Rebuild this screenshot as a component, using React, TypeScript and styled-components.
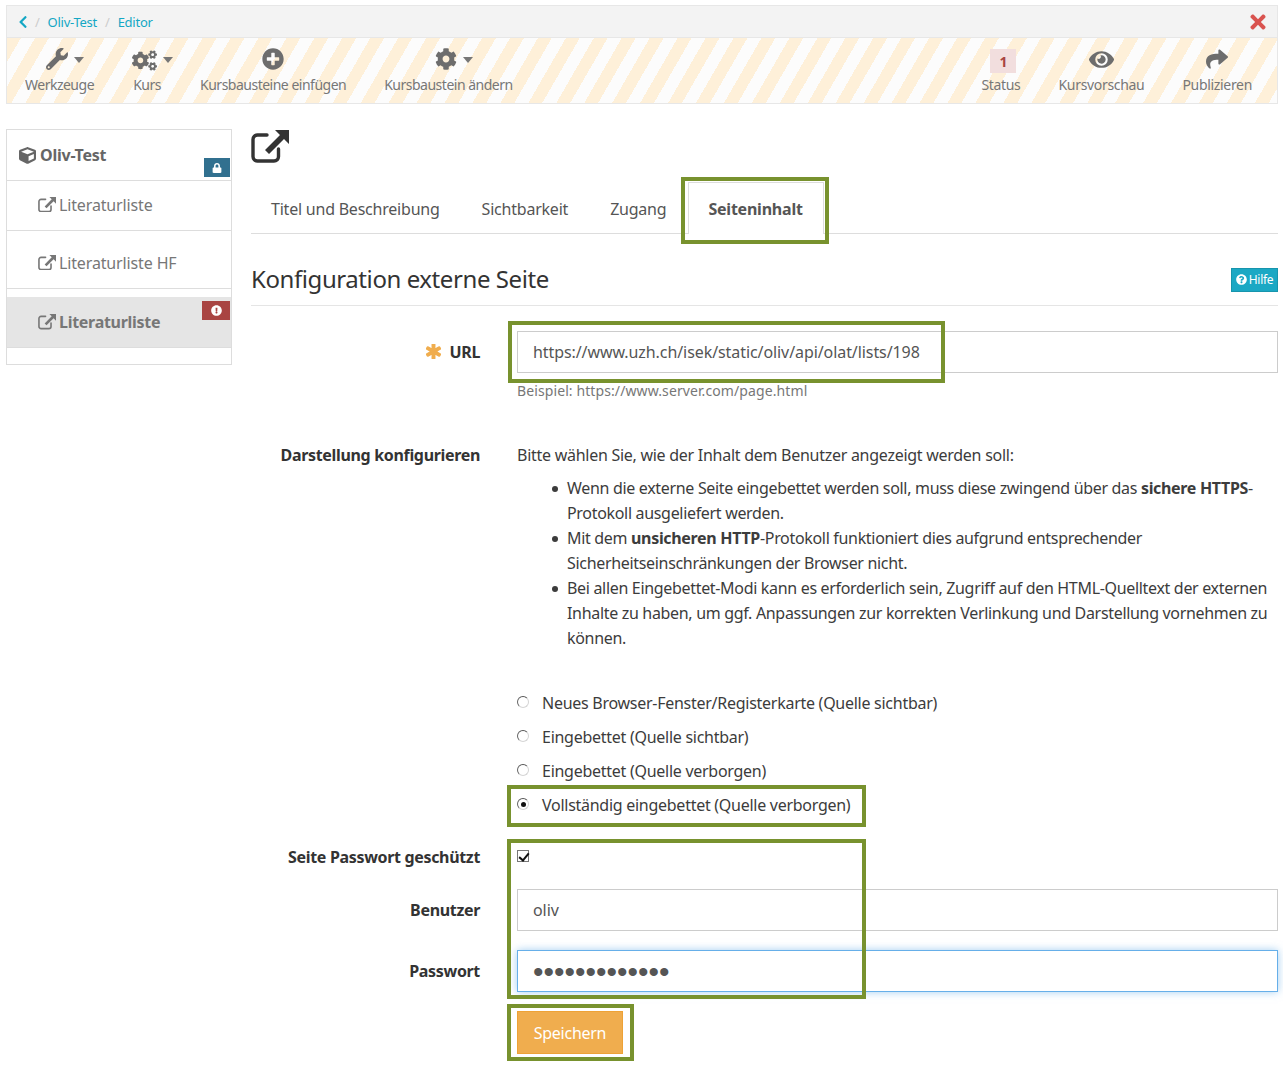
import React from 'react';
import styled, { createGlobalStyle } from 'styled-components';
import {
  FaAsterisk,
  FaChevronLeft,
  FaCog,
  FaCogs,
  FaCube,
  FaExclamationCircle,
  FaEye,
  FaLock,
  FaPlusCircle,
  FaQuestionCircle,
  FaShare,
  FaTimes,
  FaWrench,
} from 'react-icons/fa';

const GlobalStyle = createGlobalStyle`
  html, body { margin: 0; padding: 0; background: #fff; }
  body {
    font-family: "Noto Sans", "Liberation Sans", sans-serif;
    font-size: 16px;
    letter-spacing: -0.27px;
    color: #3c3c3c;
  }
  * { box-sizing: border-box; }
`;

const Page = styled.div`
  width: 1283px;
  height: 1068px;
  padding: 5px 5px 0 6px;
  overflow: hidden;
`;

// Kopfleiste
const TopBar = styled.header`
  border: 1px solid #e7e7e7;
  height: 99px;
`;

const Breadcrumb = styled.div`
  height: 32px;
  background: #f3f3f3;
  border-bottom: 1px solid #e7e7e7;
  display: flex;
  align-items: center;
  padding: 0 12px;
  font-size: 13px;
  letter-spacing: -0.25px;
  color: #14a7c4;
`;

const Crumb = styled.a`
  color: #14a7c4;
  display: flex;
`;

const BackCrumb = styled(Crumb)`
  margin: 0 -3px;
`;

const Slash = styled.span`
  color: #ccc;
  margin: 0 8px;
`;

const CloseButton = styled.span`
  margin-left: auto;
  margin-right: -4px;
  color: #d9534f;
  display: flex;
  font-size: 22px;
`;

const Toolbar = styled.div`
  height: 65px;
  display: flex;
  justify-content: space-between;
  padding-right: 6px;
  background: repeating-linear-gradient(
    120deg,
    #fef0d9 0,
    #fef0d9 12px,
    #fcfcfc 12px,
    #fcfcfc 24.2px
  );
`;

const ToolGroup = styled.div`
  display: flex;

  &:first-child {
    margin-left: -1px;
  }
`;

const Tool = styled.div`
  padding: 0 19px;
  display: flex;
  flex-direction: column;
  align-items: center;
  color: #777;
  font-size: 14px;
  letter-spacing: -0.5px;
`;

const RightTool = styled(Tool)`
  letter-spacing: -0.32px;
`;

const ToolIcon = styled.div`
  height: 38px;
  padding-top: 10px;
  display: flex;
  align-items: flex-start;
  justify-content: center;
  font-size: 22px;
  color: #6d6d6d;
`;

const EyeIcon = styled(ToolIcon)`
  font-size: 25px;
  padding-top: 9px;
`;

const MenuIcon = styled.span<{ $size?: number }>`
  position: relative;
  display: flex;
  margin-right: 5px;
  font-size: ${(p) => p.$size ?? 22}px;
`;

const Caret = styled.span`
  position: absolute;
  left: calc(100% + 6px);
  top: 9px;
  width: 0;
  height: 0;
  border-left: 5.5px solid transparent;
  border-right: 5.5px solid transparent;
  border-top: 6px solid #777;
`;

const StatusBadge = styled.span`
  width: 26px;
  height: 24px;
  margin: 1px 0 0 5px;
  background: #f2dede;
  color: #a94442;
  font-size: 14px;
  font-weight: 700;
  display: flex;
  align-items: center;
  justify-content: center;
`;

const ToolLabel = styled.div`
  line-height: 18px;
`;

// Inhalt
const Columns = styled.div`
  display: flex;
  margin-top: 25px;
`;

const Sidebar = styled.nav`
  width: 226px;
  height: 236px;
  flex-shrink: 0;
  border: 1px solid #ddd;
  color: #777;
  margin-right: 19px;
  letter-spacing: -0.14px;
`;

const RootNode = styled.div`
  position: relative;
  height: 51px;
  border-bottom: 1px solid #ddd;
  padding-left: 12px;
  display: flex;
  align-items: center;
  gap: 4px;
  font-weight: 700;
  color: #666;
  letter-spacing: -0.24px;
`;

const SideItem = styled.div<{ $height: number; $down?: number; $up?: number; $active?: boolean }>`
  position: relative;
  height: ${(p) => p.$height}px;
  padding: ${(p) => p.$down ?? 0}px 0 ${(p) => p.$up ?? 0}px 31px;
  display: flex;
  align-items: center;
  gap: 3px;
  border-bottom: 1px solid #ddd;
  font-weight: ${(p) => (p.$active ? 700 : 400)};
  letter-spacing: ${(p) => (p.$active ? -0.28 : -0.14)}px;
  background: ${(p) => (p.$active ? '#e5e5e5' : 'transparent')};
  margin-top: ${(p) => (p.$active ? 8 : 0)}px;
`;

const LockBadge = styled.span`
  position: absolute;
  right: 1px;
  bottom: 3px;
  width: 26px;
  height: 19px;
  background: #31708f;
  color: #fff;
  font-size: 10px;
  display: flex;
  align-items: center;
  justify-content: center;
`;

const ErrorBadge = styled.span`
  position: absolute;
  right: 1px;
  top: 4px;
  width: 28px;
  height: 19px;
  background: #a94442;
  color: #fff;
  font-size: 11px;
  display: flex;
  align-items: center;
  justify-content: center;
`;

const Main = styled.main`
  flex: 1;
  min-width: 0;
`;

const PageIcon = styled.div`
  height: 48px;
  padding-top: 1px;
  display: flex;
  align-items: flex-start;
  color: #333;
`;

const Tabs = styled.div`
  height: 57px;
  display: flex;
  border-bottom: 1px solid #ddd;
`;

const Tab = styled.div`
  height: 56px;
  padding: 7px 22px 0 20px;
  display: flex;
  align-items: center;
  letter-spacing: -0.22px;
  color: #555;
`;

const ActiveTab = styled.div`
  position: relative;
  height: 52px;
  margin-top: 5px;
  padding: 0 20px 0 19px;
  display: flex;
  align-items: center;
  letter-spacing: -0.22px;
  font-weight: 700;
  color: #555;
  background: #fff;
  border: 1px solid #ddd;
  border-bottom: none;
`;

const Mark = styled.div`
  position: absolute;
  border: 4px solid #78922e;
  pointer-events: none;
`;

const TabMark = styled(Mark)`
  left: -8px;
  right: -6px;
  top: -6px;
  height: 67px;
`;

const SectionHead = styled.div`
  height: 72px;
  border-bottom: 1px solid #e5e5e5;
  display: flex;
  justify-content: space-between;
  align-items: center;
  padding-top: 20px;
`;

const Heading = styled.h2`
  margin: -2px 0 0;
  font-size: 24px;
  font-weight: 400;
  letter-spacing: -0.42px;
  color: #333;
`;

const HelpButton = styled.span`
  height: 24px;
  width: 47px;
  background: #1ba8c4;
  border: 1px solid #1795ad;
  color: #fff;
  font-size: 12px;
  letter-spacing: -0.3px;
  display: flex;
  align-items: center;
  justify-content: center;
  gap: 2px;
`;

const Row = styled.div`
  display: grid;
  grid-template-columns: 229px 1fr;
  column-gap: 37px;
`;

const UrlRow = styled(Row)`
  margin-top: 25px;
`;

const DisplayRow = styled(Row)`
  margin-top: 42px;
`;

const FieldLabel = styled.label`
  font-weight: 700;
  text-align: right;
  color: #333;
  line-height: 25px;
  letter-spacing: -0.33px;
`;

const InputLabel = styled(FieldLabel)`
  padding-top: 9px;
`;

const Star = styled.span`
  color: #f0ad4e;
  font-size: 15px;
  margin-right: 8px;
  vertical-align: -1px;

  svg {
    stroke: currentColor;
    stroke-width: 50;
  }
`;

const InputWrap = styled.div`
  position: relative;
`;

const UrlMark = styled(Mark)`
  left: -9px;
  top: -10px;
  width: 437px;
  height: 62px;
`;

const TextInput = styled.input<{ $focused?: boolean }>`
  display: block;
  width: 100%;
  height: 42px;
  padding: 0 15px;
  font: inherit;
  letter-spacing: -0.08px;
  color: #555;
  background: #fff;
  border: 1px solid ${(p) => (p.$focused ? '#66afe9' : '#ccc')};
  box-shadow: ${(p) => (p.$focused ? '0 0 8px rgba(102, 175, 233, 0.6)' : 'none')};
  outline: none;
`;

const PasswordInput = styled(TextInput)`
  padding-top: 2px;
  font-family: "Liberation Sans", sans-serif;
  font-size: 30px;
  letter-spacing: 0;
`;

const Hint = styled.div`
  margin-top: 8px;
  line-height: 20px;
  font-size: 14px;
  letter-spacing: 0.1px;
  color: #777;
`;

const Intro = styled.p`
  margin: 0;
  line-height: 25px;
`;

const Bullets = styled.ul`
  margin: 8px 0 0;
  padding: 0 0 0 50px;
  line-height: 25px;
  list-style: none;
  letter-spacing: -0.32px;
`;

const Bullet = styled.li`
  position: relative;

  &::before {
    content: '';
    position: absolute;
    left: -15px;
    top: 10px;
    width: 6px;
    height: 6px;
    border-radius: 50%;
    background: #3c3c3c;
  }
`;

const RadioGroup = styled.div`
  margin-top: 35px;
  display: flex;
  flex-direction: column;
`;

const RadioRow = styled.label`
  position: relative;
  height: 34px;
  display: flex;
  align-items: center;
  gap: 13px;
`;

const RadioMark = styled(Mark)`
  left: -10px;
  top: -3px;
  width: 359px;
  height: 42px;
`;

const Radio = styled.input`
  appearance: none;
  width: 12px;
  height: 12px;
  margin: -2px 0 0 0;
  border-radius: 50%;
  border: 1px solid #d5d5d5;
  border-top-color: #555;
  border-left-color: #666;
  background: #fff;
  flex-shrink: 0;
  display: grid;
  place-items: center;

  &:checked::after {
    content: '';
    width: 5px;
    height: 5px;
    border-radius: 50%;
    background: #111;
  }
`;

const CredentialBlock = styled.div`
  position: relative;
  margin-top: 17px;
`;

const CredentialMark = styled(Mark)`
  left: 256px;
  top: 0;
  width: 359px;
  height: 160px;
`;

const CheckRow = styled(Row)`
  height: 50px;
  padding-top: 6px;
`;

const Check = styled.input`
  appearance: none;
  width: 12px;
  height: 12px;
  margin: 5px 0 0;
  border: 1px solid #777;
  background: #fff;
  position: relative;

  &:checked::after {
    content: '';
    position: absolute;
    left: 3px;
    top: 0;
    width: 4px;
    height: 8px;
    border: solid #111;
    border-width: 0 2px 2px 0;
    transform: rotate(40deg);
  }
`;

const PasswordRow = styled(Row)`
  margin-top: 19px;
`;

const SaveRow = styled(Row)`
  margin-top: 19px;
`;

const SaveWrap = styled.div`
  position: relative;
  width: 106px;
`;

const SaveMark = styled(Mark)`
  left: -10px;
  top: -7px;
  width: 127px;
  height: 57px;
`;

const SaveButton = styled.button`
  display: block;
  width: 106px;
  height: 43px;
  background: #f0ad4e;
  border: 1px solid #eea236;
  color: #fff;
  font: inherit;
  letter-spacing: inherit;
`;

// Symbol für externe Seite
const ExternalIcon: React.FC<{ width: number; stroke?: number }> = ({ width, stroke = 3.4 }) => (
  <svg width={width} height={(width * 33) / 38} viewBox="0 0 38 33" fill="none" aria-hidden="true">
    <path
      d="M16 5H6.5a4.5 4.5 0 0 0-4.5 4.500V26.500a4.500 4.500 0 0 0 4.500 4.500H23a4.500 4.500 0 0 0 4.500-4.500V19"
      stroke="currentColor"
      strokeWidth={stroke}
      strokeLinecap="round"
    />
    <path d="M24 0H38V14L33 9 18 24 14 20 29 5Z" fill="currentColor" />
  </svg>
);

const App: React.FC = () => {
  return (
    <Page>
      <GlobalStyle />
      <TopBar>
        <Breadcrumb>
          <BackCrumb as="span">
            <FaChevronLeft size={14} />
          </BackCrumb>
          <Slash>/</Slash>
          <Crumb>Oliv-Test</Crumb>
          <Slash>/</Slash>
          <Crumb>Editor</Crumb>
          <CloseButton>
            <FaTimes />
          </CloseButton>
        </Breadcrumb>
        <Toolbar>
          <ToolGroup>
            <Tool>
              <ToolIcon>
                <MenuIcon>
                  <FaWrench />
                  <Caret />
                </MenuIcon>
              </ToolIcon>
              <ToolLabel>Werkzeuge</ToolLabel>
            </Tool>
            <Tool>
              <ToolIcon>
                <MenuIcon $size={25}>
                  <FaCogs />
                  <Caret />
                </MenuIcon>
              </ToolIcon>
              <ToolLabel>Kurs</ToolLabel>
            </Tool>
            <Tool>
              <ToolIcon>
                <FaPlusCircle />
              </ToolIcon>
              <ToolLabel>Kursbausteine einfügen</ToolLabel>
            </Tool>
            <Tool>
              <ToolIcon>
                <MenuIcon>
                  <FaCog />
                  <Caret />
                </MenuIcon>
              </ToolIcon>
              <ToolLabel>Kursbaustein ändern</ToolLabel>
            </Tool>
          </ToolGroup>
          <ToolGroup>
            <RightTool>
              <ToolIcon>
                <StatusBadge>1</StatusBadge>
              </ToolIcon>
              <ToolLabel>Status</ToolLabel>
            </RightTool>
            <RightTool>
              <EyeIcon>
                <FaEye />
              </EyeIcon>
              <ToolLabel>Kursvorschau</ToolLabel>
            </RightTool>
            <RightTool>
              <ToolIcon>
                <FaShare />
              </ToolIcon>
              <ToolLabel>Publizieren</ToolLabel>
            </RightTool>
          </ToolGroup>
        </Toolbar>
      </TopBar>

      <Columns>
        <Sidebar>
          <RootNode>
            <FaCube size={17} />
            Oliv-Test
            <LockBadge>
              <FaLock />
            </LockBadge>
          </RootNode>
          <SideItem $height={50} $up={2}>
            <ExternalIcon width={18} />
            Literaturliste
          </SideItem>
          <SideItem $height={58} $down={6}>
            <ExternalIcon width={18} />
            Literaturliste HF
          </SideItem>
          <SideItem $height={51} $active>
            <ExternalIcon width={18} />
            Literaturliste
            <ErrorBadge>
              <FaExclamationCircle />
            </ErrorBadge>
          </SideItem>
        </Sidebar>

        <Main>
          <PageIcon>
            <ExternalIcon width={38} />
          </PageIcon>
          <Tabs>
            <Tab>Titel und Beschreibung</Tab>
            <Tab>Sichtbarkeit</Tab>
            <Tab>Zugang</Tab>
            <ActiveTab>
              Seiteninhalt
              <TabMark />
            </ActiveTab>
          </Tabs>
          <SectionHead>
            <Heading>Konfiguration externe Seite</Heading>
            <HelpButton>
              <FaQuestionCircle size={11} />
              Hilfe
            </HelpButton>
          </SectionHead>

          <UrlRow>
            <InputLabel>
              <Star>
                <FaAsterisk />
              </Star>
              URL
            </InputLabel>
            <div>
              <InputWrap>
                <TextInput readOnly value="https://www.uzh.ch/isek/static/oliv/api/olat/lists/198" />
                <UrlMark />
              </InputWrap>
              <Hint>Beispiel: https://www.server.com/page.html</Hint>
            </div>
          </UrlRow>

          <DisplayRow>
            <FieldLabel>Darstellung konfigurieren</FieldLabel>
            <div>
              <Intro>Bitte wählen Sie, wie der Inhalt dem Benutzer angezeigt werden soll:</Intro>
              <Bullets>
                <Bullet>
                  Wenn die externe Seite eingebettet werden soll, muss diese zwingend über das{' '}
                  <b>sichere HTTPS</b>-Protokoll ausgeliefert werden.
                </Bullet>
                <Bullet>
                  Mit dem <b>unsicheren HTTP</b>-Protokoll funktioniert dies aufgrund entsprechender
                  Sicherheitseinschränkungen der Browser nicht.
                </Bullet>
                <Bullet>
                  Bei allen Eingebettet-Modi kann es erforderlich sein, Zugriff auf den HTML-Quelltext
                  der externen Inhalte zu haben, um ggf. Anpassungen zur korrekten Verlinkung und
                  Darstellung vornehmen zu können.
                </Bullet>
              </Bullets>
              <RadioGroup>
                <RadioRow>
                  <Radio type="radio" name="mode" />
                  Neues Browser-Fenster/Registerkarte (Quelle sichtbar)
                </RadioRow>
                <RadioRow>
                  <Radio type="radio" name="mode" />
                  Eingebettet (Quelle sichtbar)
                </RadioRow>
                <RadioRow>
                  <Radio type="radio" name="mode" />
                  Eingebettet (Quelle verborgen)
                </RadioRow>
                <RadioRow>
                  <Radio type="radio" name="mode" defaultChecked />
                  Vollständig eingebettet (Quelle verborgen)
                  <RadioMark />
                </RadioRow>
              </RadioGroup>
            </div>
          </DisplayRow>

          <CredentialBlock>
            <CheckRow>
              <FieldLabel>Seite Passwort geschützt</FieldLabel>
              <div>
                <Check type="checkbox" defaultChecked />
              </div>
            </CheckRow>
            <Row>
              <InputLabel>Benutzer</InputLabel>
              <TextInput readOnly value="oliv" />
            </Row>
            <PasswordRow>
              <InputLabel>Passwort</InputLabel>
              <PasswordInput readOnly type="password" value="geheimes-pass" $focused />
            </PasswordRow>
            <CredentialMark />
          </CredentialBlock>

          <SaveRow>
            <span />
            <SaveWrap>
              <SaveButton type="button">Speichern</SaveButton>
              <SaveMark />
            </SaveWrap>
          </SaveRow>
        </Main>
      </Columns>
    </Page>
  );
};

export default App;
